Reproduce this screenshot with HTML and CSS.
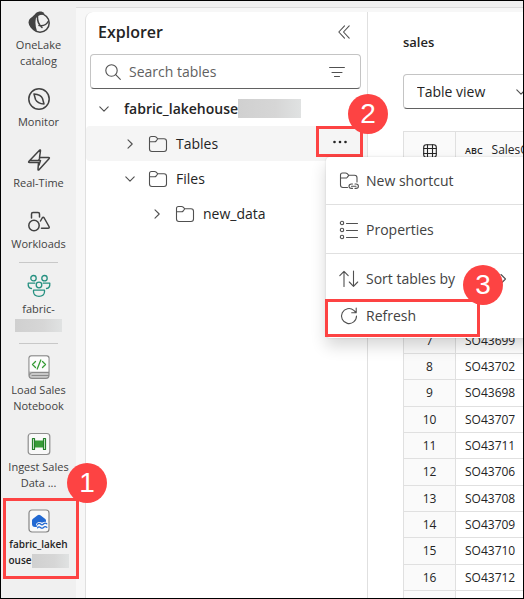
FILE: index.html
```html
<!DOCTYPE html>
<html lang="en">
<head>
<meta charset="utf-8">
<meta name="viewport" content="width=device-width, initial-scale=1">
<title>Lakehouse explorer</title>
<link rel="stylesheet" href="styles.css">
</head>
<body>
<svg class="defs" aria-hidden="true">
  <symbol id="folder" viewBox="0 0 20 20"><path d="M1.500 15V4.500Q1.500 2.500 3.500 2.500H6.500Q7.500 2.500 8.200 3.200L9.800 4.800H16Q18.500 4.800 18.500 7.300V15Q18.500 17.500 16 17.500H4Q1.500 17.500 1.500 15ZM1.500 7.700H6.500Q7.500 7.700 8.200 7L9.800 4.800"/></symbol>
  <symbol id="down" viewBox="0 0 12 12"><path d="M1.800 3.800L6 8.200L10.200 3.800"/></symbol>
  <symbol id="right" viewBox="0 0 12 12"><path d="M4 1.800L8.200 6L4 10.200"/></symbol>
</svg>
<div class="app">
  <nav class="rail" aria-label="Workspace">
    <a class="rail-item" href="#">
      <svg class="rail-icon" viewBox="0 0 24 24"><circle cx="13" cy="13" r="9.200"/><path d="M7 7C7.500 2 14 -.5 17.500 3.500L12 5.500L9 8Q7.500 14 10 21Q2 19 1.500 12.500Q2 7 7 7Z" fill="#424242" stroke="none"/><path d="M10.500 6.500Q10 13 15 17.500M12 15.500Q19 16.500 21.500 11"/></svg>
      <span>OneLake catalog</span>
    </a>
    <a class="rail-item" href="#">
      <svg class="rail-icon" viewBox="0 0 24 24"><circle cx="12" cy="12" r="10.200"/><path d="M7 7Q14 7.500 15.500 11.500L17 17Q10.500 16.500 8.500 12.500Z"/></svg>
      <span>Monitor</span>
    </a>
    <a class="rail-item" href="#">
      <svg class="rail-icon" viewBox="0 0 24 24"><path d="M12.500 2.200Q13.500 1.500 13.500 2.700L12.500 9.500H21.500Q23 9.500 22 10.700L12 21.800Q11 22.500 11 21.200L11.500 14.500H2.500Q1 14.500 2 13.200ZM3 12.500H13.500L12 17M13 9.500L11.500 12.500"/></svg>
      <span>Real-Time</span>
    </a>
    <a class="rail-item" href="#">
      <svg class="rail-icon" viewBox="0 0 24 24"><circle cx="7" cy="16.500" r="5.200"/><path d="M4.500 9V5Q4.500 3.500 6 3.500H11Q12.500 3.500 12.500 5V8M14.500 19.200H21Q22.800 19.200 22 17.500L17.200 9Q16.200 7.500 15.200 9L13.500 12"/></svg>
      <span>Workloads</span>
    </a>
    <hr class="rail-rule">
    <a class="rail-item" href="#">
      <svg class="rail-icon team" viewBox="0 0 24 24"><circle cx="6.500" cy="4.200" r="2.700"/><circle cx="17.500" cy="4.200" r="2.700"/><circle cx="12" cy="11" r="2.800"/><path d="M6.500 16.200H17.500V18Q17 22.300 12 22.300T6.500 18ZM7.800 9.200H1.200Q.8 14 4.500 14.500M16.200 9.200H22.800Q23.200 14 19.500 14.500"/></svg>
      <span>fabric-</span>
      <span class="mask mask-team"></span>
    </a>
    <hr class="rail-rule">
    <a class="rail-item" href="#">
      <svg class="rail-icon" viewBox="0 0 24 24"><g stroke="#8a8a8a" stroke-width="1.200"><path d="M2 20V3Q2 .8 4.200 .8H19.800Q22 .8 22 3V20Q22 23.300 19 23.300H5Q2 23.300 2 20Z" fill="#c8c8c8"/><path d="M2.600 16.500V3.500Q2.600 1.500 4.600 1.500H19.400Q21.400 1.500 21.400 3.500V16.500Z" fill="#fcfcfc" stroke="none"/><path d="M2.500 20Q3 17.500 5.500 17.500H21.500M5 20.500H21.500"/></g><g stroke="#359b35" stroke-width="1.300"><path d="M8.500 6.500L5.500 9.500L8.500 12.500M15.500 6.500L18.500 9.500L15.500 12.500M13.800 5L10.200 14"/></g></svg>
      <span>Load Sales Notebook</span>
    </a>
    <a class="rail-item" href="#">
      <svg class="rail-icon" viewBox="0 0 24 24"><rect x="1.200" y="1.500" width="21.600" height="21" rx="3" fill="#f9f9f9" stroke="#8d8d8d" stroke-width="1.200"/><path d="M8 8.500H16V15.500H8Z" fill="#379c37" stroke="none"/><path d="M5.500 6.500V17.500H7.500V6.500ZM16.500 6.500V17.500H18.500V6.500Z" fill="#dff2df" stroke="#24802a" stroke-width="1.200"/></svg>
      <span>Ingest Sales Data ...</span>
    </a>
    <a class="rail-item current" href="#">
      <svg class="rail-icon" viewBox="0 0 24 24"><rect x="2" y="1" width="20" height="22" rx="3" fill="#f9f9f9" stroke="#858585" stroke-width="1.200"/><path d="M5 11.500Q5 10.500 5.700 9.900L10.600 6.300Q12 5.300 13.400 6.300L18.300 9.900Q19 10.500 19 11.500V13.500H11V18H8Q5 18 5 15Z" fill="#2168d2" stroke="none"/><path d="M10.500 15.300Q12 13.500 13.500 15T16.500 15T19.800 14.800M10.500 18.800Q12 17 13.500 18.500T16.500 18.500T19.800 18.300" stroke="#f9f9f9" stroke-width="2.800"/><path d="M10.500 15.300Q12 13.500 13.500 15T16.500 15T19.800 14.800M10.500 18.800Q12 17 13.500 18.500T16.500 18.500T19.800 18.300" stroke="#2168d2" stroke-width="1.200"/></svg>
      <span class="current-name">fabric_lakeh<br>ouse<span class="mask mask-lake"></span></span>
      <span class="callout callout-lake"></span>
      <span class="badge badge-lake">1</span>
    </a>
  </nav>

  <div class="workspace">
    <section class="explorer" aria-label="Explorer">
      <header class="explorer-head">
        <h1>Explorer</h1>
        <button class="icon-button" aria-label="Collapse explorer"><svg class="collapse" viewBox="0 0 12 14"><path d="M6.500 .8L.8 7L6.500 13.200M11.200 .8L5.500 7L11.200 13.200"/></svg></button>
      </header>
      <div class="search">
        <svg class="search-icon" viewBox="0 0 16 16"><circle cx="6.500" cy="6.500" r="5.700"/><path d="M10.700 10.700L15.300 15.300"/></svg>
        <input type="text" placeholder="Search tables" aria-label="Search tables">
        <button class="icon-button" aria-label="Filter"><svg class="filter-icon" viewBox="0 0 16 12"><path d="M.6 1.500H15.400M3 6.500H13M5.500 10.500H10.500"/></svg></button>
      </div>
      <div class="tree">
        <button class="node level-0"><svg class="chevron"><use href="#down"/></svg><span>fabric_lakehouse</span><span class="mask mask-root"></span></button>
        <div class="node-row">
          <button class="node level-1"><svg class="chevron"><use href="#right"/></svg><svg class="folder"><use href="#folder"/></svg><span>Tables</span></button>
          <button class="more" aria-label="More options"><svg viewBox="0 0 16 4"><circle cx="2.500" cy="2" r="1.300"/><circle cx="8" cy="2" r="1.300"/><circle cx="13.500" cy="2" r="1.300"/></svg></button>
          <span class="badge badge-more">2</span>
          <div class="menu" role="menu">
            <button role="menuitem"><svg viewBox="0 0 20 20"><path d="M8.500 16.500H4Q1.500 16.500 1.500 14V4Q1.500 2 3.500 2H6.500Q7.500 2 8.200 2.700L9.800 4.300H15.500Q18 4.300 18 6.800V11M1.500 7H6.500Q7.500 7 8.200 6.300L9.800 4.300M13.500 13H12.500Q10 13 10 15.200T12.500 17.400H13.500M16 13H17Q19.400 13 19.400 15.200T17 17.400H16M12.500 15.200H17"/></svg>New shortcut</button>
            <hr>
            <button role="menuitem"><svg viewBox="0 0 20 20"><circle cx="3" cy="3" r="1.700"/><circle cx="3" cy="10" r="1.700"/><circle cx="3" cy="17" r="1.700"/><path d="M7.500 3.500H18.500M7.500 10.500H18.500M7.500 17.500H18.500"/></svg>Properties</button>
            <hr>
            <button role="menuitem"><svg viewBox="0 0 20 20"><path d="M5 17.500V2.500M.8 6.700L5 2.300L9.200 6.700M14.500 2V17M10.300 13L14.500 17.400L18.700 13"/></svg>Sort tables by<svg class="submenu" viewBox="0 0 12 12"><path d="M4 1.500L8.500 6L4 10.500"/></svg></button>
            <button role="menuitem"><svg viewBox="0 0 20 20"><path d="M17.500 10A7.500 7.500 0 1 1 14.800 4.300L17 6.500M17.200 2V6.700H12.700"/></svg>Refresh<span class="callout callout-refresh"></span></button>
            <span class="badge badge-refresh">3</span>
          </div>
        </div>
        <button class="node level-1"><svg class="chevron"><use href="#down"/></svg><svg class="folder"><use href="#folder"/></svg><span>Files</span></button>
        <button class="node level-2"><svg class="chevron"><use href="#right"/></svg><svg class="folder"><use href="#folder"/></svg><span>new_data</span></button>
      </div>
    </section>

    <main class="preview">
      <h2>sales</h2>
      <div class="view-picker">
        <select aria-label="View"><option>Table view</option></select>
        <svg class="chevron"><use href="#down"/></svg>
      </div>
      <table>
        <thead>
          <tr>
            <th><svg class="grid-icon" viewBox="0 0 14 14"><rect x=".7" y=".7" width="12.600" height="12.600" rx="2.500"/><path d="M4.500 .7V13.300M9.500 .7V13.300M.7 4.500H13.300M.7 9.500H13.300"/></svg></th>
            <th><span class="type">ABC</span>SalesO</th>
          </tr>
        </thead>
        <tbody>
          <tr><td></td><td></td></tr>
          <tr><td></td><td></td></tr>
          <tr><td></td><td></td></tr>
          <tr><td></td><td></td></tr>
          <tr><td></td><td></td></tr>
          <tr><td></td><td></td></tr>
          <tr><td>7</td><td>SO43699</td></tr>
          <tr><td>8</td><td>SO43702</td></tr>
          <tr><td>9</td><td>SO43698</td></tr>
          <tr><td>10</td><td>SO43707</td></tr>
          <tr><td>11</td><td>SO43711</td></tr>
          <tr><td>12</td><td>SO43706</td></tr>
          <tr><td>13</td><td>SO43708</td></tr>
          <tr><td>14</td><td>SO43709</td></tr>
          <tr><td>15</td><td>SO43710</td></tr>
          <tr><td>16</td><td>SO43712</td></tr>
          <tr><td></td><td></td></tr>
        </tbody>
      </table>
    </main>
  </div>
</div>
</body>
</html>
```
FILE: styles.css
```css
* { box-sizing: border-box; }

body {
  margin: 0;
  color: #242424;
  font-family: "Open Sans", "Noto Sans", sans-serif;
  font-size: 14px;
}

button, input, select { font: inherit; color: inherit; }

button {
  margin: 0;
  padding: 0;
  border: 0;
  background: none;
  text-align: left;
}

svg {
  flex: none;
  fill: none;
  stroke: #505050;
  stroke-width: 1.1;
  stroke-linecap: round;
  stroke-linejoin: round;
}

.defs { position: absolute; width: 0; height: 0; }

.app {
  display: grid;
  grid-template-columns: 75px minmax(0, 1fr);
  height: 100vh;
  overflow: hidden;
  border: 1px solid #000;
  background: #f0f0f0;
}

/* Navigation rail */
.rail { position: relative; z-index: 3; }

.rail-item {
  position: relative;
  display: flex;
  flex-direction: column;
  align-items: center;
  padding: 9px 6px;
  color: #424242;
  font-size: 11px;
  line-height: 16px;
  text-align: center;
  text-decoration: none;
}

.rail-icon {
  width: 24px;
  height: 24px;
  margin-bottom: 3px;
  stroke: #424242;
  stroke-width: 1.5;
}

.team { stroke: #259080; stroke-width: 1.3; }

.rail-rule {
  width: 39px;
  height: 1px;
  margin: 1px auto 2px;
  border: 0;
  background: #c8c8c8;
}

.current { color: #242424; font-weight: 600; }
.current-name { font-size: 10px; }

.mask {
  display: inline-block;
  background: linear-gradient(90deg, #d0d0d0, #d6d6d6 60%, #e0e2e2);
}

.mask-team { width: 47px; height: 13px; margin: 2px 0 1px; }
.mask-lake { width: 37px; height: 14px; vertical-align: middle; }
.mask-root { width: 63px; height: 19px; }

/* Callouts */
.callout {
  position: absolute;
  border: 3px solid #fd4343;
  pointer-events: none;
}

.badge {
  position: absolute;
  z-index: 4;
  width: 40px;
  height: 40px;
  border-radius: 50%;
  background: #fd4343;
  color: #fff;
  font: 28px/40px "Liberation Sans", Arial, sans-serif;
  text-align: center;
}

.callout-lake { inset: -2px -3px -2px 2px; }
.badge-lake { top: -37px; left: 66px; }

/* Workspace */
.workspace {
  display: grid;
  grid-template-columns: 283px minmax(0, 1fr);
  margin-top: 6px;
  padding: 4px 0 0 9px;
  border-top: 1px solid #dcdcdc;
  background: #f7f7f7;
}

.explorer {
  position: relative;
  z-index: 2;
  border: solid #e0e0e0;
  border-width: 0 1px;
  border-top-left-radius: 8px;
  background: #fff;
}

.explorer-head {
  display: flex;
  align-items: center;
  justify-content: space-between;
  height: 42px;
  padding: 0 17px 2px 12px;
}

h1 { margin: 0; font-size: 16px; font-weight: 600; }

.icon-button { display: flex; }
.collapse { width: 12px; height: 14px; }

.search {
  display: flex;
  align-items: center;
  height: 35px;
  margin: 0 6px 0 4px;
  padding: 0 15px 0 14px;
  border: 1px solid #c4c4c4;
  border-bottom-color: #616161;
  border-radius: 4px;
}

.search-icon { width: 16px; height: 16px; }

.search input {
  flex: 1;
  min-width: 0;
  padding: 0 8px;
  border: 0;
  outline: 0;
  background: none;
}

.search input::placeholder { color: #616161; opacity: 1; }
.filter-icon { width: 16px; height: 12px; }

.tree { padding: 2px 0 0; }

.node {
  display: flex;
  align-items: center;
  width: 100%;
  height: 35px;
}

.node-row {
  position: relative;
  display: flex;
  border-radius: 4px 0 0 4px;
  background: #f5f5f5;
}

.chevron { width: 12px; height: 12px; }
.folder { width: 20px; height: 20px; margin: 0 8px 0 12px; }

.level-0 { padding-left: 12px; font-weight: 600; }
.level-0 .chevron { margin-right: 14px; }
.level-1 { padding-left: 38px; }
.level-2 { padding-left: 65px; }

.more {
  display: grid;
  place-items: center;
  flex: none;
  width: 47px;
  height: 31px;
  margin-right: 4px;
  border: 3px solid #fd4343;
}

.more svg { width: 16px; height: 4px; fill: #242424; stroke: none; }
.badge-more { top: -32px; right: -21px; }

/* Context menu */
.menu {
  position: absolute;
  top: 31px;
  left: 240px;
  z-index: 3;
  width: 240px;
  padding: 5px 0 4px;
  border-radius: 4px;
  background: #fff;
  box-shadow: 0 8px 16px rgba(0, 0, 0, .16), 0 0 2px rgba(0, 0, 0, .16);
  color: #424242;
}

.menu button {
  position: relative;
  display: flex;
  align-items: center;
  gap: 7px;
  width: 100%;
  height: 37px;
  padding-left: 13px;
}

.menu svg { width: 20px; height: 20px; }
.menu .submenu { width: 12px; height: 12px; margin-left: 35px; }

.menu hr {
  height: 1px;
  margin: 5px 0 6px;
  border: 0;
  background: #e0e0e0;
}

.callout-refresh { inset: 2px 86px -3px -1px; }
.badge-refresh { top: 108px; left: 137px; }

/* Data preview */
.preview {
  overflow: hidden;
  padding: 20px 0 0 35px;
  background: #fff;
}

h2 {
  margin: 0 0 22px;
  font-size: 13px;
  font-weight: 600;
  line-height: 20px;
}

.view-picker { position: relative; width: 136px; }

.view-picker select {
  width: 100%;
  height: 35px;
  padding: 0 13px;
  border: 1px solid #c4c4c4;
  border-bottom-color: #616161;
  border-radius: 4px;
  background: #fff;
  appearance: none;
}

.view-picker .chevron { position: absolute; top: 12px; right: 12px; }

table {
  width: 260px;
  margin-top: 22px;
  border-collapse: separate;
  border-spacing: 0;
  border-left: 1px solid #e0e0e0;
  table-layout: fixed;
  font-size: 12px;
}

th, td {
  height: 26px;
  padding: 0 9px;
  border: solid #e0e0e0;
  border-width: 0 1px 1px 0;
  line-height: 20px;
  text-align: left;
}

tbody tr:nth-child(3n) td { height: 27px; }

th {
  height: 39px;
  border-top-width: 1px;
  background: #fafafa;
  font-weight: 400;
  white-space: nowrap;
}

th:first-child, td:first-child {
  width: 52px;
  background: #fafafa;
  text-align: center;
}

.grid-icon {
  width: 14px;
  height: 14px;
  stroke: #242424;
  vertical-align: middle;
}

.type { margin-right: 9px; font-size: 9px; font-weight: 600; }
```
